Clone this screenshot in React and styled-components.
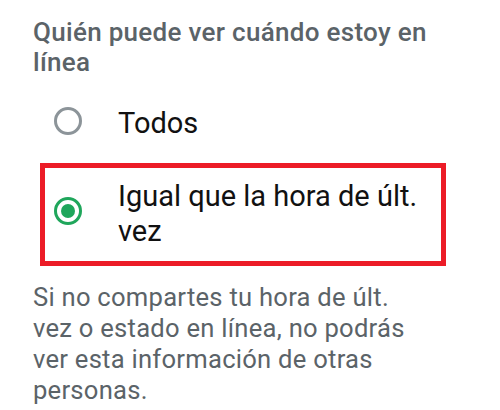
import React from "react";
import styled, { createGlobalStyle } from "styled-components";

const Global = createGlobalStyle`
  html, body { margin: 0; padding: 0; background: #ffffff; }
  body { font-family: Roboto, "Noto Sans", "Liberation Sans", sans-serif; }
`;

const Page = styled.div`
  width: 500px;
  height: 410px;
  box-sizing: border-box;
  padding: 17px 0 0 33px;
  overflow: hidden;
  background: #fff;
`;

const Title = styled.div`
  width: 410px;
  font-size: 26px;
  line-height: 30px;
  letter-spacing: 0.3px;
  font-weight: 500;
  color: #5b6368;
`;

const Option = styled.div`
  display: flex;
  align-items: center;
  gap: 36px;
  box-sizing: border-box;
  ${(p) =>
    p.$highlight
      ? `
    margin: 22px 0 0 7px;
    width: 406px;
    border: 5px solid #ec1c27;
    padding: 11px 8px 12px 9px;
  `
      : `
    margin-top: 29px;
    padding-left: 21px;
  `}
`;

const RadioOuter = styled.span`
  flex: 0 0 auto;
  width: 28px;
  height: 28px;
  box-sizing: border-box;
  border-radius: 50%;
  border: 3px solid ${(p) => (p.$checked ? "#1fa65b" : "#8c9499")};
  display: flex;
  align-items: center;
  justify-content: center;
  margin-bottom: 6px;
`;

const RadioDot = styled.span`
  width: 14px;
  height: 14px;
  border-radius: 50%;
  background: #1fa65b;
`;

const Label = styled.div`
  font-size: 29px;
  line-height: 35px;
  color: #111111;
`;

const Note = styled.div`
  width: 396px;
  margin-top: 16px;
  font-size: 25.6px;
  line-height: 31px;
  letter-spacing: 0.25px;
  color: #5b6368;
`;

function Radio({ checked }) {
  return <RadioOuter $checked={checked}>{checked && <RadioDot />}</RadioOuter>;
}

export default function App() {
  return (
    <>
      <Global />
      <Page>
        <Title>Quién puede ver cuándo estoy en línea</Title>
        <Option>
          <Radio />
          <Label>Todos</Label>
        </Option>
        <Option $highlight>
          <Radio checked />
          <Label>Igual que la hora de últ. vez</Label>
        </Option>
        <Note>
          Si no compartes tu hora de últ. vez o estado en línea, no podrás ver
          esta información de otras personas.
        </Note>
      </Page>
    </>
  );
}
